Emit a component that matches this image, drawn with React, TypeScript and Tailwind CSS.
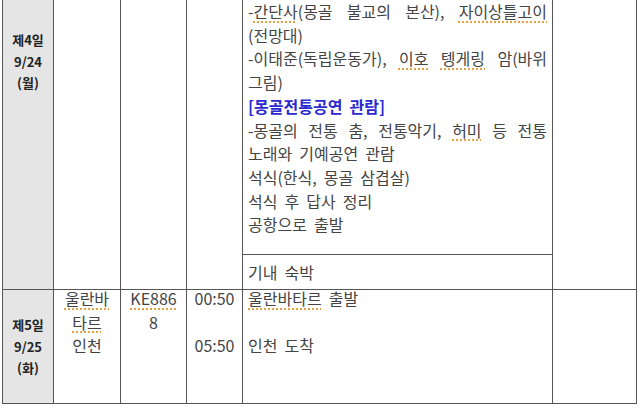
import React from "react";

const font = { fontFamily: '"Noto Sans CJK KR", "Noto Sans", sans-serif' };

function Sq({ children }: { children: React.ReactNode }) {
  return (
    <span className="underline decoration-dotted decoration-[#e8a040] decoration-[1.5px] underline-offset-[3px]">
      {children}
    </span>
  );
}

function DayCell({ lines, className }: { lines: string[]; className: string }) {
  return (
    <div className={`w-[51px] shrink-0 border-r border-[#555] bg-[#e5e5e5] flex flex-col items-center text-[13px] font-bold leading-[21.5px] text-[#222] [word-spacing:0px] ${className}`}>
      {lines.map((l) => (
        <div key={l}>{l}</div>
      ))}
    </div>
  );
}

export default function App() {
  const just = "text-justify [text-align-last:justify]";
  return (
    <div className="w-[640px] h-[408px] bg-white overflow-hidden" style={font}>
      <div className="ml-[2px] w-[635px] border-x border-b border-[#555] text-[#444] text-[16px] [word-spacing:3.5px]">
        {/* Row 1 */}
        <div className="flex h-[289px]">
          <DayCell lines={["제4일", "9/24", "(월)"]} className="pt-[29px]" />
          <div className="w-[67px] shrink-0 border-r border-[#555]" />
          <div className="w-[66px] shrink-0 border-r border-[#555]" />
          <div className="w-[56px] shrink-0 border-r border-[#555]" />
          <div className="w-[310px] shrink-0 border-r border-[#555] flex flex-col">
            <div className="h-[255px] border-b border-[#555] px-[5px] leading-[23.7px]">
              <div className={just}>
                -<Sq>간단사</Sq>(몽골 불교의 본산), <Sq>자이상틀고이</Sq>
              </div>
              <div>(전망대)</div>
              <div className={just}>
                -이태준(독립운동가), <Sq>이호</Sq> <Sq>텡게링</Sq> 암(바위
              </div>
              <div>그림)</div>
              <div className="text-[#2a2ad0] font-semibold">[몽골전통공연 관람]</div>
              <div className={just}>
                -몽골의 전통 춤, 전통악기, <Sq>허미</Sq> 등 전통
              </div>
              <div>노래와 기예공연 관람</div>
              <div>석식(한식, 몽골 삼겹살)</div>
              <div>석식 후 답사 정리</div>
              <div>공항으로 출발</div>
            </div>
            <div className="h-[34px] flex items-center px-[5px]">기내 숙박</div>
          </div>
          <div className="w-[83px] shrink-0" />
        </div>
        {/* Row 2 */}
        <div className="flex h-[114px] border-t border-[#555] leading-[23.7px]">
          <DayCell lines={["제5일", "9/25", "(화)"]} className="justify-center" />
          <div className="w-[67px] shrink-0 border-r border-[#555] flex flex-col items-center">
            <div className="-mt-[3px] flex flex-col items-center">
              <Sq>울란바</Sq>
              <Sq>타르</Sq>
              <span>인천</span>
            </div>
          </div>
          <div className="w-[66px] shrink-0 border-r border-[#555] flex flex-col items-center">
            <div className="-mt-[3px] flex flex-col items-center">
              <Sq>KE886</Sq>
              <span>8</span>
            </div>
          </div>
          <div className="w-[56px] shrink-0 border-r border-[#555] flex flex-col items-center">
            <div className="-mt-[3px] flex flex-col items-center">
              <span>00:50</span>
              <span>&nbsp;</span>
              <span>05:50</span>
            </div>
          </div>
          <div className="w-[310px] shrink-0 border-r border-[#555] px-[5px]">
            <div className="-mt-[3px]">
              <div>
                <Sq>울란바타르</Sq> 출발
              </div>
              <div>&nbsp;</div>
              <div>인천 도착</div>
            </div>
          </div>
          <div className="w-[83px] shrink-0" />
        </div>
      </div>
    </div>
  );
}
